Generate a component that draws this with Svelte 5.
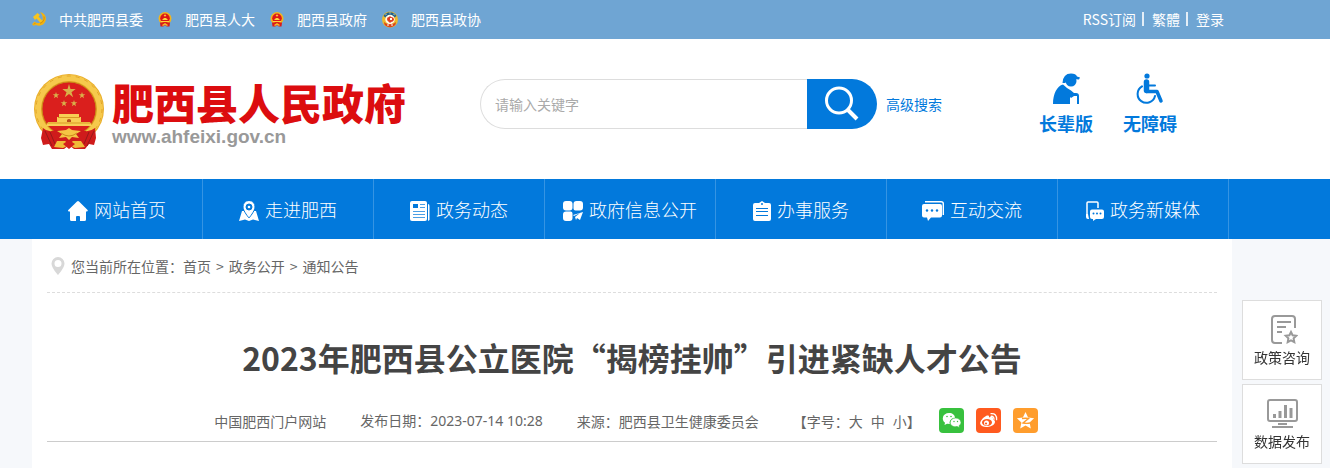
<script>
    const departments = [
        { name: "中共肥西县委", icon: "party" },
        { name: "肥西县人大", icon: "emblem" },
        { name: "肥西县政府", icon: "emblem" },
        { name: "肥西县政协", icon: "cppcc" },
    ];

    const menu = [
        { name: "网站首页", icon: "home" },
        { name: "走进肥西", icon: "map" },
        { name: "政务动态", icon: "news" },
        { name: "政府信息公开", icon: "open" },
        { name: "办事服务", icon: "service" },
        { name: "互动交流", icon: "chat" },
        { name: "政务新媒体", icon: "media" },
    ];

    const crumbs = ["首页", "政务公开", "通知公告"];
    const sizes = ["大", "中", "小"];

    let keyword = "";
</script>

<div class="page">
    <div class="topbar">
        <div class="wrap topbar-inner">
            <div class="departments">
                {#each departments as item}
                    <a href="#top">
                        {#if item.icon === "party"}
                            <svg width="14" height="14" viewBox="0 0 14 14">
                                <path d="M1 5 5.500 1l2.500 2-1.500 1.500 5.500 6-2 2-5.500-6-1.500 1.500z" fill="#f9c51c" />
                                <path d="M8 .3c4.800.8 6.800 4.800 5.600 8.500-1.400 4.600-6.300 6-10 3.900L2 14.000l-2-1.700 2.500-2.800c3 2.400 6.500 1.800 7.700-.9C11.400 5.600 10.500 2.600 8 .3z" fill="#f3b310" />
                                <path d="m2 12.400 1.500-1.500M12 4.500c.8 3-1 6-4 6.800" fill="none" stroke="#b9760d" stroke-width=".6" />
                            </svg>
                        {:else if item.icon === "emblem"}
                            <svg width="14" height="15" viewBox="0 0 14 15">
                                <circle cx="7" cy="6.500" r="6.500" fill="#f0b51f" />
                                <circle cx="7" cy="6.300" r="4.800" fill="#dd1717" />
                                <path d="m7 2 .5 1h1l-.8.700.3 1L7 4.100l-1 .6.300-1-.8-.7h1zM4.500 8V7h1V6h3v1h1v1zM3 9h8v1H3z" fill="#ffd43b" />
                                <path d="M2 10.500h10l-.5 4H8.700L7 13l-1.700 1.500H2.500z" fill="#d91a1a" />
                                <path d="m4 13 3-2 3 2-1 1-2-1.300L5 14z" fill="#f5be2a" />
                            </svg>
                        {:else}
                            <svg width="16" height="17" viewBox="0 0 16 17">
                                <circle cx="8" cy="8.500" r="8" fill="#edb92c" />
                                <path d="M1.500 5a7.500 7.500 0 0 1 13 0l-2 1.500a5.500 5.500 0 0 0-9 0z" fill="#20618c" />
                                <path d="m3 4 2-1M7 2h2M11 3l2 1" stroke="#cfe2c8" stroke-width=".6" />
                                <circle cx="8" cy="8.500" r="4.700" fill="#fffbe9" />
                                <path d="M5 8q0-2 2-2l1-1 1 1q3 0 3 3-1 2-3 2l-1 1-1-1q-2-1-2-3z" fill="#df3b20" />
                                <path d="M8 7h2v2H8z" fill="#fffbe9" />
                                <path d="M2 11c3 3 9 3 12 0l-.5 2.500c-3 3.500-8 3.500-11 0z" fill="#d9421c" />
                                <path d="M6 13v2m4-2v2" stroke="#fff" />
                            </svg>
                        {/if}
                        {item.name}
                    </a>
                {/each}
            </div>
            <div class="user-links">
                <a href="#rss">RSS订阅</a>
                <a href="#traditional">繁體</a>
                <a href="#login">登录</a>
            </div>
        </div>
    </div>

    <header>
        <div class="wrap header-inner">
            <a class="logo" href="#home">
                <svg width="72" height="78" viewBox="0 0 72 78">
                    <circle cx="37" cy="36" r="35" fill="#e9ad28" />
                    <circle cx="37" cy="36" r="31" fill="none" stroke="#f6c94c" stroke-width="6" />
                    <circle cx="37" cy="36" r="33" fill="none" stroke="#e2a62a" stroke-dasharray="4 5" />
                    <circle cx="37" cy="36" r="27" fill="#da1f1d" stroke="#c98a1a" />
                    <g fill="#d9b04a">
                        <path d="m37 11 1.500 5h5.200l-4.200 3.200 1.600 5-4.100-3.100-4.200 3.100 1.700-5-4.200-3.200h5.200z" />
                        <path id="star" d="m24 19 .8 2.300h2.500l-2 1.500.7 2.400-2-1.500-2.100 1.500.8-2.400-2-1.500h2.500z" />
                        <use href="#star" x="26" />
                        <use href="#star" x="8" y="8" />
                        <use href="#star" x="18" y="8" />
                    </g>
                    <path d="M27 41h20v3h2v5h9l2 4H14l2-4h9v-5h2z" fill="#f8cf55" />
                    <path d="M26 44.500h22M16 50h42" stroke="#d99a25" />
                    <path d="M35 49v-2q2-2 4 0v2z" fill="#b9501a" />
                    <path d="M11 55q5 5 13 2h25q8 3 14-2l1 10-2 7-5-1-4 5H42l-5-4-5 4H20l-3-5-6 1-2-7z" fill="#cf1b1b" />
                    <path d="m13 58 7 15m-2-14 5 12m39-13-7 15m2-14-5 12" stroke="#96191a" />
                    <path d="m25 58 9-1 3-2 3 2 9 1-5 3 3 4-7-1-3 3-3-3-7 1 3-4z" fill="#f5c544" />
                    <path d="M29 60q8 6 16 0" fill="none" stroke="#cd8c1d" />
                    <path d="m22 74 3-6h8l4 3 4-3h8l4 6-10 1-6-3-6 3z" fill="#f0bb38" />
                    <path d="m31 71 6-4 6 4-6 5z" fill="#d51d1c" />
                </svg>
                <span class="logo-text">
                    <strong>肥西县人民政府</strong>
                    <small>www.ahfeixi.gov.cn</small>
                </span>
            </a>

            <form class="search" on:submit|preventDefault>
                <input type="text" aria-label="请输入关键字" placeholder="请输入关键字" bind:value={keyword} />
                <button type="submit" aria-label="搜索">
                    <svg width="36" height="36" viewBox="0 0 36 36" fill="none" stroke="#fff">
                        <circle cx="15" cy="14.500" r="12.500" stroke-width="3" />
                        <path d="m23.500 23.500 9.500 9.500" stroke-width="4" />
                    </svg>
                </button>
                <a href="#search">高级搜索</a>
            </form>

            <div class="access">
                <a href="#elder">
                    <svg width="28" height="32" viewBox="0 0 28 32" fill="#0279dc">
                        <circle cx="19" cy="8" r="5.500" />
                        <path d="M10.500 10Q11 .5 19 .5q5 0 6 3l3 1-1 2q-9-1-14 3.500z" />
                        <path d="M11 11.500q4 4 8 6l3 2.500h2q3 0 3 3v8h-2v-8h-3l-3 2-1-1v7H1C1 21 5 13 11 11.500z" />
                    </svg>
                    长辈版
                </a>
                <a href="#barrier-free">
                    <svg width="28" height="32" viewBox="0 0 28 32">
                        <circle cx="11" cy="3" r="2.600" fill="#0279dc" />
                        <g fill="none" stroke="#0279dc" stroke-linecap="round" stroke-linejoin="round">
                            <path d="M10.500 9v8.500" stroke-width="5.500" />
                            <path d="M10.500 18.500h10.500l4 9.500" stroke-width="3.500" />
                            <path d="M13 12.500h6" stroke-width="2" />
                            <path d="M6 13.400A8.800 8.800 0 1 0 19 23" stroke-width="2" />
                        </g>
                    </svg>
                    无障碍
                </a>
            </div>
        </div>
    </header>

    <nav>
        <ul class="wrap">
            {#each menu as item}
                <li>
                    <a href="#nav">
                        {#if item.icon === "home"}
                            <svg width="20" height="20" viewBox="0 0 20 20" fill="#fff">
                                <path d="M9 .6q1-1 2 0l8.600 8.400q.7 1.500-1 1.500h-.600V18.500q0 1.500-1.500 1.500H12v-4q0-1-1-1H9q-1 0-1 1v4H3.500Q2 20 2 18.500v-8H1q-1.500 0-.7-1.500z" />
                            </svg>
                        {:else if item.icon === "map"}
                            <svg width="20" height="20" viewBox="0 0 20 20" fill="#fff">
                                <path d="M3 10h14l3 10-6-1.500-4 1.500-4-1.500L0 20z" />
                                <path fill-rule="evenodd" stroke="#0279dc" d="M10-.5A6 6 0 0 1 16 6c0 4-6 11-6 11S4 10 4 6a6 6 0 0 1 6-6.500zm0 3.500a3 3 0 1 0 0 6 3 3 0 0 0 0-6z" />
                                <circle cx="10" cy="6" r="1.300" />
                            </svg>
                        {:else if item.icon === "news"}
                            <svg width="20" height="20" viewBox="0 0 20 20">
                                <rect width="17" height="20" rx="2" fill="#fff" />
                                <path d="M18 3q1.500 0 1.500 2v14l-1.500 1z" fill="#fff" />
                                <path d="M3 3h5v4H3z" fill="#0279dc" />
                                <path d="M10 3.500h5M10 6.500h5M3 10.500h12M3 13.500h12M3 16.500h12" stroke="#4b9fe5" />
                            </svg>
                        {:else if item.icon === "open"}
                            <svg width="20" height="20" viewBox="0 0 20 20" fill="#fff">
                                <rect width="9.500" height="9.500" rx="3" />
                                <path d="M13.500 0H17q3 0 3 3v3.500q0 3-3 3h-4.500q-2 0-2-2V3q0-3 3-3zM3 10.500h4.500q2 0 2 2V17q0 3-3 3H3q-3 0-3-3v-3.500q0-3 3-3z" />
                                <path d="m20 11-3 8-3-2-1 2-1-3 5-4-6 3-1-1z" />
                            </svg>
                        {:else if item.icon === "service"}
                            <svg width="18" height="20" viewBox="0 0 18 20">
                                <path d="M2 2h4l3-2 3 2h4q2 0 2 2v14q0 2-2 2H2q-2 0-2-2V4q0-2 2-2z" fill="#fff" />
                                <circle cx="9" cy="3" r="1" fill="#0279dc" />
                                <path d="M3 7.500h12M3 10.500h12M3 14.500h12" stroke="#0279dc" />
                            </svg>
                        {:else if item.icon === "chat"}
                            <svg width="22" height="20" viewBox="0 0 22 20">
                                <path d="M3 .7h16q2.300 0 2.300 2V14" fill="none" stroke="#fff" stroke-width="1.400" />
                                <path d="M2 3h16q2 0 2 2v9.500q0 2-2 2H9L6 20l-1-3.500H2q-2 0-2-2V5q0-2 2-2z" fill="#fff" />
                                <g fill="#0279dc"><circle cx="5" cy="9.500" r="1.200" /><circle cx="10" cy="9.500" r="1.200" /><circle cx="15" cy="9.500" r="1.200" /></g>
                            </svg>
                        {:else}
                            <svg width="18" height="20" viewBox="0 0 18 20">
                                <path d="M12 7V2q0-1-1-1H2Q1 1 1 2v12" fill="none" stroke="#fff" stroke-width="1.500" />
                                <path d="M0 13h2l1 5H2q-2 0-2-2zM6 8.500h10q2 0 2 2V16q0 2-2 2h-6l-3 2v-2H6q-2 0-2-2v-5.500q0-2 2-2z" fill="#fff" />
                                <g fill="#0279dc"><circle cx="7.500" cy="12.500" r="1" /><circle cx="11" cy="12.500" r="1" /><circle cx="14.500" cy="12.500" r="1" /></g>
                            </svg>
                        {/if}
                        {item.name}
                    </a>
                </li>
            {/each}
        </ul>
    </nav>

    <main class="wrap content">
        <div class="location">
            <svg width="14" height="18" viewBox="0 0 14 18">
                <path fill="#d8d8d8" fill-rule="evenodd" d="M7 0a6.500 6.500 0 0 1 6.500 6.500C13.500 11 7 18 7 18S.5 11 .5 6.500A6.500 6.500 0 0 1 7 0zm0 3a3.500 3.500 0 1 0 0 7 3.500 3.500 0 0 0 0-7z" />
            </svg>
            <span>您当前所在位置：</span>
            {#each crumbs as crumb, i}
                {#if i > 0}<span class="sep">&gt;</span>{/if}
                <a href="#crumb">{crumb}</a>
            {/each}
        </div>

        <h1>2023年肥西县公立医院“揭榜挂帅”引进紧缺人才公告</h1>

        <div class="meta">
            <span>中国肥西门户网站</span>
            <span>发布日期：<time>2023-07-14 10:28</time></span>
            <span>来源：肥西县卫生健康委员会</span>
            <div class="font-size">
                【字号：
                <div class="sizes">
                    {#each sizes as size}
                        <button type="button">{size}</button>
                    {/each}
                </div>
                】
            </div>
            <div class="share">
                <a class="wechat" href="#wechat" aria-label="微信">
                    <svg width="25" height="25" viewBox="0 0 25 25">
                        <path d="M10 5c3.500 0 6 2 6 5-4 0-6 3-5 6l-3-.3L5.500 17l.5-2.300C2 12 3.500 5 10 5z" fill="#fff" />
                        <path d="M16.500 10c3 0 5.500 2 5.500 4.500 0 1.500-1 2.500-2 3.300l.5 2-2.300-1.200c-4 .7-7-1.200-7-4.100 0-2.500 2.300-4.500 5.300-4.500z" fill="#fff" stroke="#38c13e" stroke-width=".7" />
                        <g fill="#38c13e"><circle cx="8" cy="8.500" r=".8" /><circle cx="12" cy="8.500" r=".8" /><circle cx="15" cy="13.500" r=".7" /><circle cx="18.500" cy="13.500" r=".7" /></g>
                    </svg>
                </a>
                <a class="weibo" href="#weibo" aria-label="微博">
                    <svg width="25" height="25" viewBox="0 0 25 25">
                        <path d="M10 8c2-1 3.500-.5 3 1.500 3-1 5-.5 4 2 2 .8 2.500 2 1.500 4-2 4-13 5-14.200.5C3.500 13.500 7 9.500 10 8z" fill="#fff" />
                        <ellipse cx="11" cy="14.500" rx="5" ry="3.400" fill="#ff5a1f" />
                        <circle cx="10.500" cy="15" r="2.500" fill="#fff" />
                        <circle cx="10" cy="15.500" r="1.100" fill="#ff5a1f" />
                        <path d="M15 8.300q3-.3 3 3M15 5.700q6-.5 5.600 6" fill="none" stroke="#fff" stroke-width="1.300" stroke-linecap="round" />
                    </svg>
                </a>
                <a class="qzone" href="#qzone" aria-label="QQ空间">
                    <svg width="25" height="25" viewBox="0 0 25 25">
                        <path d="m12.500 4 2.600 5.600 6 .7-4.500 4.200 1.200 6-5.300-3-5.300 3 1.200-6-4.500-4.200 6-.7z" fill="#fff" />
                        <path d="M9 10.500q4-.5 6.500 0L10 15q4 .8 7 0" fill="none" stroke="#ff9d2d" stroke-width="1.300" />
                    </svg>
                </a>
            </div>
        </div>
    </main>

    <aside>
        <a href="#consult">
            <svg width="32" height="32" viewBox="0 0 32 32" fill="none" stroke="#999" stroke-width="2">
                <path d="M16 30H9q-3 0-3-3V6q0-3 3-3h17q3 0 3 3v9M11 9h14M11 14h9M11 19h5" />
                <path d="m25 19 1.600 3.300 3.700.5-2.700 2.600.7 3.700-3.300-1.700-3.300 1.700.7-3.700-2.700-2.600 3.700-.5z" />
            </svg>
            政策咨询
        </a>
        <a href="#data">
            <svg width="32" height="32" viewBox="0 0 32 32" fill="none" stroke="#999">
                <rect x="2" y="3" width="29" height="21" rx="2" stroke-width="2" />
                <path d="M8.500 21v-4M14 21v-7M19.500 21V8M25 21V11" stroke-width="3" />
                <path d="M12 27h9M6 30h21" stroke-width="2" />
            </svg>
            数据发布
        </a>
    </aside>
</div>

<style>
    :global(body) {
        background: #f6f8fb;
    }

    .page {
        --blue: #0279dc;
        min-height: 100vh;
        display: flex;
        flex-direction: column;
        font: 14px/20px "Noto Sans CJK SC", sans-serif;
        color: #666;
    }

    .wrap {
        width: calc(100% - 130px);
        max-width: 1200px;
        margin: 0 0 0 32px;
        box-sizing: border-box;
    }

    a {
        color: inherit;
        text-decoration: none;
    }

    svg {
        display: block;
        flex: none;
    }

    .topbar {
        background: #6fa5d3;
        color: #fff;
    }

    .topbar-inner {
        display: flex;
        justify-content: space-between;
        align-items: center;
        height: 39px;
        padding: 0 8px 1px 0;
    }

    .departments {
        display: flex;
        gap: 15px;
    }

    .departments a {
        display: flex;
        align-items: center;
        gap: 13px;
    }

    .user-links {
        display: flex;
        align-items: center;
        line-height: 14px;
    }

    .user-links a + a {
        margin-left: 6px;
        padding-left: 8px;
        border-left: 2px solid #e4eef7;
    }

    header {
        background: #fff;
    }

    .header-inner {
        display: flex;
        align-items: flex-start;
        height: 140px;
        padding: 34px 55px 0 0;
    }

    .logo {
        display: flex;
        align-items: center;
        gap: 8px;
        width: 448px;
    }

    .logo-text {
        display: flex;
        flex-direction: column;
    }

    .logo-text strong {
        font-size: 42px;
        line-height: 50px;
        font-weight: 900;
        color: #dc0d0f;
    }

    .logo-text small {
        font: bold 19px/20px "Liberation Sans", sans-serif;
        color: #999;
    }

    .search {
        display: flex;
        align-items: center;
        margin-top: 6px;
        color: var(--blue);
    }

    .search input {
        width: 327px;
        height: 50px;
        box-sizing: border-box;
        padding: 0 14px;
        border: 1px solid #ddd;
        border-right: 0;
        border-radius: 25px 0 0 25px;
        font: inherit;
        color: #333;
        background: #fff;
    }

    .search input::placeholder {
        color: #aaa;
    }

    .search button {
        display: flex;
        align-items: center;
        justify-content: center;
        width: 70px;
        height: 50px;
        margin-right: 9px;
        padding: 0;
        border: 0;
        border-radius: 0 25px 25px 0;
        background: var(--blue);
    }

    .access {
        display: flex;
        gap: 30px;
        margin-left: auto;
        font-size: 18px;
        line-height: 24px;
        font-weight: bold;
        color: var(--blue);
    }

    .access a {
        display: flex;
        flex-direction: column;
        align-items: center;
        gap: 6px;
    }

    nav {
        background: var(--blue);
        color: #fff;
    }

    nav ul {
        display: flex;
        padding: 0 3px 0 0;
        list-style: none;
    }

    nav li {
        flex: 1;
        border-right: 1px solid #3594e3;
    }

    nav a {
        display: flex;
        align-items: center;
        justify-content: center;
        gap: 6px;
        height: 60px;
        font-size: 18px;
        font-weight: 300;
        white-space: nowrap;
    }

    nav svg {
        margin-top: 3px;
    }

    .content {
        flex: 1;
        padding: 0 15px;
        background: #fff;
    }

    .location {
        display: flex;
        align-items: center;
        height: 53px;
        padding-left: 4px;
        border-bottom: 1px dashed #ddd;
    }

    .location svg {
        margin-right: 6px;
    }

    .sep {
        margin: 0 5px;
    }

    h1 {
        margin: 40px 0 27px;
        font-size: 32px;
        line-height: 48px;
        font-weight: bold;
        text-align: center;
        color: #444;
    }

    .meta {
        display: flex;
        align-items: center;
        justify-content: center;
        gap: 34px;
        padding-bottom: 8px;
        border-bottom: 1px solid #ccc;
    }

    time {
        font-family: "Noto Sans", sans-serif;
    }

    .font-size,
    .sizes,
    .share {
        display: flex;
    }

    .sizes {
        gap: 8px;
    }

    .sizes button {
        padding: 0;
        border: 0;
        background: none;
        font: inherit;
        color: inherit;
    }

    .share {
        gap: 12px;
        margin: 0 12px 0 -16px;
    }

    .share a {
        border-radius: 4px;
    }

    .wechat {
        background: #38c13e;
    }

    .weibo {
        background: #ff5a1f;
    }

    .qzone {
        background: #ff9d2d;
    }

    aside {
        position: fixed;
        right: 8px;
        bottom: 4px;
        display: flex;
        flex-direction: column;
        gap: 4px;
        color: #333;
    }

    aside a {
        display: flex;
        flex-direction: column;
        align-items: center;
        justify-content: center;
        gap: 2px;
        width: 78px;
        height: 78px;
        border: 1px solid #ddd;
        background: #fff;
    }
</style>
